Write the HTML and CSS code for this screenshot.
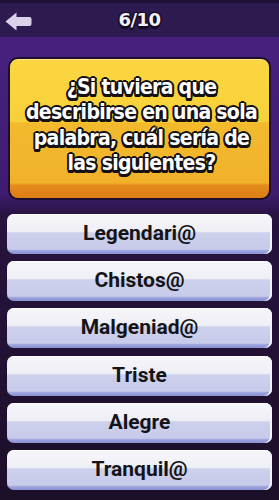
FILE: index.html
```html
<!DOCTYPE html>
<html lang="es">
<head>
<meta charset="utf-8">
<title>Quiz</title>
<link rel="stylesheet" href="styles.css">
</head>
<body>
<div class="screen">
  <header class="topbar">
    <svg class="back" width="27" height="19" viewBox="0 0 27 19">
      <path d="M0.5 9.5 L11.5 0.5 L11.5 5 L24.5 5 Q26.5 5 26.5 7 L26.5 12 Q26.5 14 24.5 14 L11.5 14 L11.5 18.5 Z" fill="#d9d2ea"/>
    </svg>
    <div class="count">6/10</div>
  </header>
  <section class="question-area">
    <div class="card">
      <p class="question">¿Si tuviera que describirse en una sola palabra, cuál sería de las siguientes?</p>
    </div>
  </section>
  <section class="answers">
    <button class="answer">Legendari@</button>
    <button class="answer">Chistos@</button>
    <button class="answer">Malgeniad@</button>
    <button class="answer">Triste</button>
    <button class="answer">Alegre</button>
    <button class="answer">Tranquil@</button>
  </section>
</div>
</body>
</html>
```
FILE: styles.css
```css
* { box-sizing: border-box; }
html, body { margin: 0; padding: 0; }
body {
  width: 279px;
  height: 500px;
  overflow: hidden;
  background: #1c0f28;
  font-family: "DejaVu Sans", sans-serif;
}
.screen {
  display: flex;
  flex-direction: column;
  height: 500px;
}
.topbar {
  position: relative;
  height: 37px;
  flex: none;
  background: #2d1a50;
  border-top: 3px solid #1f1236;
  display: flex;
  align-items: center;
  justify-content: center;
}
.back {
  position: absolute;
  left: 5px;
  top: 9px;
}
.count {
  color: #f4f0f8;
  font-family: "DejaVu Sans", sans-serif;
  font-weight: bold;
  font-size: 18px;
  letter-spacing: -0.5px;
  text-shadow:
    -1.5px 0 #150a20, 1.5px 0 #150a20, 0 -1.5px #150a20, 0 1.5px #150a20,
    -1px -1px #150a20, 1px -1px #150a20, -1px 1px #150a20, 1px 1px #150a20,
    0 2.5px #150a20;
  margin-top: -1px;
}
.question-area {
  flex: none;
  padding: 20px 8px 14px 8px;
  background: linear-gradient(#48217f 0%, #3f1c70 88%, #2a1444 100%);
}
.card {
  height: 143px;
  border: 2px solid #1e0f2c;
  border-radius: 10px;
  background: linear-gradient(#fbd640 0%, #f8d13a 45%, #f3ba2e 46%, #f1b22a 89%, #e48a1b 91%, #dc7f17 100%);
  box-shadow: inset 0 1px 0 #fde78a;
  display: flex;
  align-items: center;
  justify-content: center;
  padding: 0 4px 6px 8px;
}
.question {
  margin: 0;
  text-align: center;
  color: #ffffff;
  font-family: "DejaVu Sans Condensed", "DejaVu Sans", sans-serif;
  font-weight: bold;
  font-size: 21px;
  line-height: 25.5px;
  letter-spacing: -0.7px;
  text-shadow:
    -2px 0 #141014, 2px 0 #141014, 0 -2px #141014, 0 2px #141014,
    -1.5px -1.5px #141014, 1.5px -1.5px #141014, -1.5px 1.5px #141014, 1.5px 1.5px #141014,
    0 3px #141014, 1px 3px #141014, -1px 3px #141014;
}
.answers {
  flex: 1;
  display: flex;
  flex-direction: column;
  gap: 7.2px;
  padding: 0 7px;
  background: linear-gradient(#27143f 0%, #1c0f28 100%);
}
.answer {
  height: 40px;
  flex: none;
  border: none;
  border-radius: 7px;
  background: linear-gradient(#f6f6fa 0%, #eeeef5 44%, #cdd1ec 47%, #c7cbea 88%, #9aa1dc 92%, #8b92d2 100%);
  box-shadow: inset -2px 0 0 #f2f2fb, inset 0 1px 0 #ffffff;
  color: #141418;
  font-family: Roboto, "Liberation Sans", sans-serif;
  font-weight: bold;
  font-size: 21px;
  padding: 0 0 2px 0;
  display: flex;
  align-items: center;
  justify-content: center;
}
```
